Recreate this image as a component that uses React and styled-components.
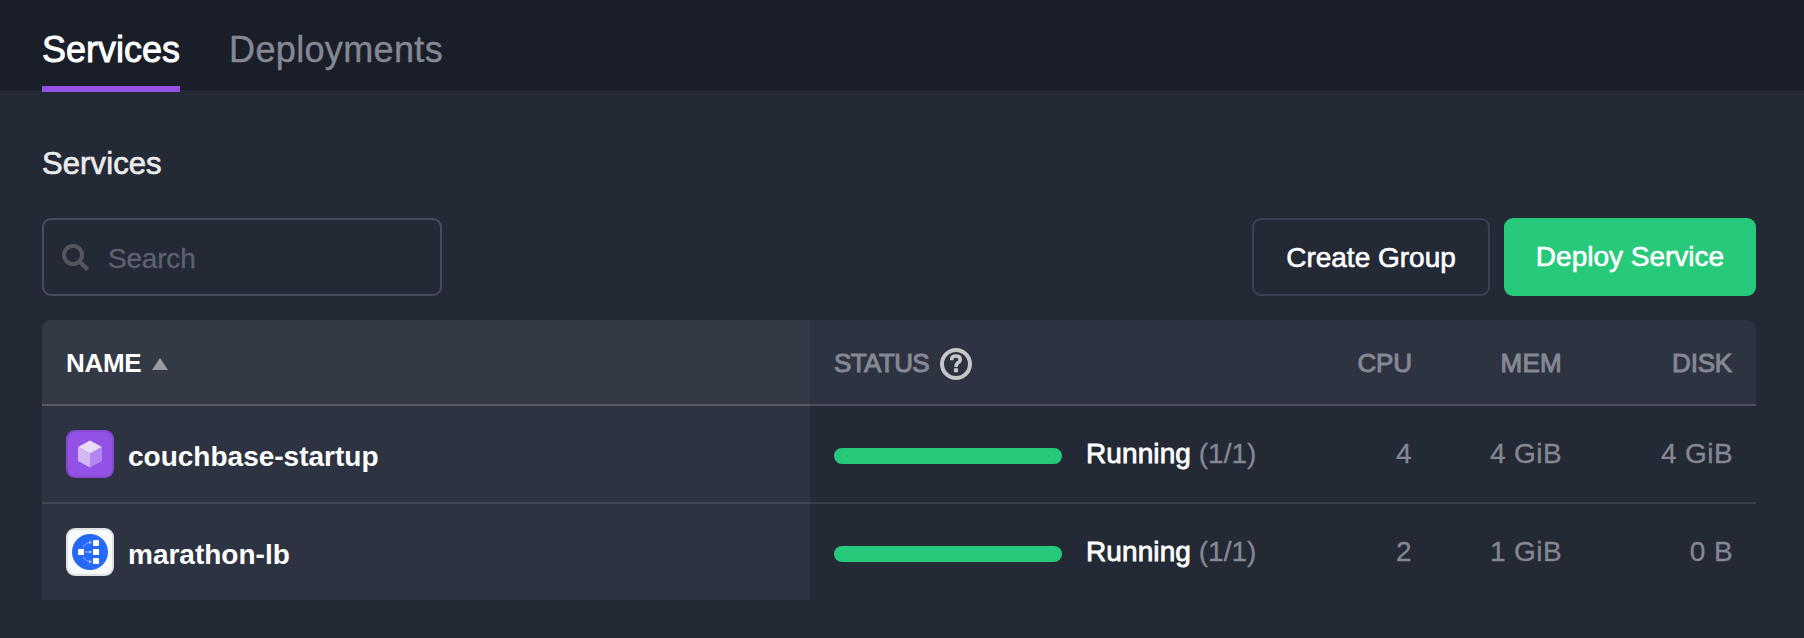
import React from "react";
import styled, { createGlobalStyle } from "styled-components";

const GlobalStyle = createGlobalStyle`
  *, *::before, *::after { box-sizing: border-box; }
  body {
    margin: 0;
    background: #242936;
    color: #fff;
    font-family: "Liberation Sans", Arial, sans-serif;
    font-size: 28px;
  }
  button, input { font: inherit; color: inherit; }
`;

const Page = styled.div`
  min-height: 638px;
  overflow: hidden;
`;

const TopBar = styled.nav`
  display: flex;
  gap: 49px;
  height: 90px;
  padding: 0 42px;
  background: #1a1e28;
`;

const Tab = styled.a`
  position: relative;
  height: 90px;
  padding-top: 9px;
  font-size: 36px;
  line-height: 81px;
  letter-spacing: ${(p) => (p.$active ? "0" : "0.35px")};
  color: ${(p) => (p.$active ? "#fff" : "#858893")};
  -webkit-text-stroke: ${(p) => (p.$active ? "0.9px" : "0.4px")} currentColor;

  &::after {
    content: "";
    display: ${(p) => (p.$active ? "block" : "none")};
    position: absolute;
    left: 0;
    right: 0;
    bottom: -2px;
    height: 6px;
    background: #9351e5;
  }
`;

const Content = styled.main`
  padding: 54px 48px 0 42px;
`;

const Heading = styled.h1`
  margin: 0 0 34px;
  font-size: 31px;
  font-weight: 400;
  line-height: 40px;
  letter-spacing: 0.1px;
  color: #ebebec;
  -webkit-text-stroke: 0.7px currentColor;
`;

const Toolbar = styled.div`
  display: flex;
  align-items: stretch;
  height: 78px;
  margin-bottom: 24px;
`;

const SearchBox = styled.label`
  display: flex;
  align-items: center;
  gap: 19px;
  width: 400px;
  margin-right: auto;
  padding: 0 18px;
  border: 2px solid #474b5e;
  border-radius: 9px;

  svg { flex: none; }
`;

const SearchInput = styled.input`
  flex: 1;
  min-width: 0;
  padding: 3px 0 0;
  border: 0;
  outline: 0;
  background: none;
  letter-spacing: -0.2px;
  -webkit-text-stroke: 0.3px #5d6171;

  &::placeholder { color: #5d6171; opacity: 1; }
`;

const Button = styled.button`
  width: ${(p) => (p.$primary ? "252px" : "238px")};
  margin-left: ${(p) => (p.$primary ? "14px" : "0")};
  padding: ${(p) => (p.$primary ? "0 0 1px" : "2px 0 0")};
  border: ${(p) => (p.$primary ? "0" : "2px solid #3c4054")};
  border-radius: 9px;
  background: ${(p) => (p.$primary ? "#27c97b" : "transparent")};
  color: #fff;
  -webkit-text-stroke: 0.6px currentColor;
  white-space: nowrap;
`;

const Table = styled.div`
  border-radius: 9px 9px 0 0;
  overflow: hidden;
`;

const Row = styled.div`
  display: grid;
  grid-template-columns: 768px 442px 160px 150px 1fr;
  height: ${(p) => (p.$last ? "96px" : "98px")};
  box-shadow: ${(p) => (p.$last ? "none" : "inset 0 -2px #393e4b")};
`;

const HeaderRow = styled(Row)`
  height: 86px;
  background: #2e3341;
  box-shadow: none;
`;

const Cell = styled.div`
  display: flex;
  align-items: center;
  justify-content: ${(p) => (p.$right ? "flex-end" : "flex-start")};
  padding: 0 ${(p) => (p.$right ? "0" : "24px")} 2px;
  padding-left: ${(p) => (p.$right ? "0" : "24px")};
  color: #858893;
`;

const ValueCell = styled(Cell)`
  padding: 0 ${(p) => (p.$end ? "23px" : "0")} ${(p) => (p.$last ? "0" : "2px")} 0;
  letter-spacing: 0.4px;
  -webkit-text-stroke: 0.3px currentColor;
`;

const HeaderCell = styled(Cell)`
  padding: 3px ${(p) => (p.$end ? "24px" : p.$right ? "0" : "24px")} 1px;
  border-bottom: 2px solid ${(p) => (p.$sorted ? "#555962" : "#4c4f5d")};
  background: ${(p) => (p.$sorted ? "#343946" : "transparent")};
  font-size: 26px;
  font-weight: ${(p) => (p.$sorted ? 700 : 400)};
  color: ${(p) => (p.$sorted ? "#fff" : "#858893")};
  -webkit-text-stroke: ${(p) => (p.$sorted ? "0" : "1px")} currentColor;

  svg { flex: none; margin: 2px 0 0 11px; }
`;

const HeaderLabel = styled.span`
  letter-spacing: ${(p) => p.$tracking}px;
`;

const NameCell = styled(Cell)`
  gap: 14px;
  padding-bottom: ${(p) => (p.$last ? "0" : "2px")};
  background: #2e3341;
  box-shadow: ${(p) => (p.$last ? "none" : "inset 0 -2px #414653")};
`;

const ServiceName = styled.span`
  padding-top: 5px;
  font-weight: 700;
  color: #fff;
`;

const StatusCell = styled(Cell)`
  padding-right: 0;
  padding-bottom: ${(p) => (p.$last ? "0" : "2px")};
  white-space: pre;
  -webkit-text-stroke: 0.3px currentColor;
`;

const HealthBar = styled.div`
  flex: none;
  width: 228px;
  height: 16px;
  margin: 4px 24px 0 0;
  border-radius: 8px;
  background: #27c97b;
`;

const StatusText = styled.span`
  color: #fff;
  letter-spacing: 0.1px;
  -webkit-text-stroke: 0.8px currentColor;
`;

function SearchIcon() {
  return (
    <svg width="27" height="27" viewBox="0 0 27 27" fill="none" stroke="#53565f" strokeWidth="4">
      <circle cx="11" cy="11" r="9" />
      <path d="M17.5 17.5 25.6 25.6" strokeWidth="4.2" />
    </svg>
  );
}

function SortIcon() {
  return (
    <svg width="16" height="12" viewBox="0 0 16 12">
      <path d="M8 0 16 12H0Z" fill="#9a9ca3" />
    </svg>
  );
}

function HelpIcon() {
  return (
    <svg width="32" height="32" viewBox="0 0 32 32" fill="none" stroke="#c7c7cb" strokeWidth="4">
      <circle cx="16" cy="16" r="14" />
      <path d="M11.8 12.2V11Q11.8 8 16 8T20.2 11.6Q20.2 13.6 18.2 14.6T16 19" strokeWidth="3.6" />
      <path d="M14 22.3h4" />
    </svg>
  );
}

function PackageIcon() {
  return (
    <svg width="48" height="48" viewBox="0 0 48 48">
      <rect width="48" height="48" rx="9" fill="#8449ce" />
      <rect x="2" y="2" width="44" height="44" rx="7" fill="#9351e5" />
      <path d="M24 10.5 36 17 24 23.7 12 17Z" fill="#e9dcfa" />
      <path d="M12 17 24 23.7V37.5L12 31Z" fill="#d3b8f5" />
      <path d="M36 17 24 23.7V37.5L36 31Z" fill="#b586ee" />
    </svg>
  );
}

function BalancerIcon() {
  return (
    <svg width="48" height="48" viewBox="0 0 48 48">
      <rect width="48" height="48" rx="9" fill="#e1e1e1" />
      <rect x="2" y="2" width="44" height="44" rx="7" fill="#fafafa" />
      <circle cx="24" cy="24" r="18" fill="#2669f6" />
      <g fill="#fff">
        <rect x="12" y="21" width="6" height="6" rx="0.8" />
        <rect x="27" y="12" width="6" height="6" rx="0.8" />
        <rect x="27" y="21" width="6" height="6" rx="0.8" />
        <rect x="27" y="30" width="6" height="6" rx="0.8" />
      </g>
      <g fill="none" stroke="#a9c6fc" strokeWidth="0.9">
        <path d="M17 19Q19.5 15 24 14.4" strokeDasharray="2 0.7" />
        <path d="M19 24H24.5" />
        <path d="M17 29Q19.5 33 24 33.6" strokeDasharray="2 0.7" />
      </g>
      <g fill="#c4d8fd">
        <path d="M23.2 12.7 26 14.3 23.4 16Z" />
        <path d="M23.4 22.5 26 24 23.4 25.5Z" />
        <path d="M23.4 32 26 33.7 23.2 35.3Z" />
      </g>
    </svg>
  );
}

const services = [
  { name: "couchbase-startup", Icon: PackageIcon, cpu: "4", mem: "4 GiB", disk: "4 GiB" },
  { name: "marathon-lb", Icon: BalancerIcon, cpu: "2", mem: "1 GiB", disk: "0 B" },
];

export default function App() {
  return (
    <Page>
      <GlobalStyle />
      <TopBar>
        <Tab $active>Services</Tab>
        <Tab>Deployments</Tab>
      </TopBar>
      <Content>
        <Heading>Services</Heading>
        <Toolbar>
          <SearchBox>
            <SearchIcon />
            <SearchInput placeholder="Search" />
          </SearchBox>
          <Button>Create Group</Button>
          <Button $primary>Deploy Service</Button>
        </Toolbar>
        <Table>
          <HeaderRow>
            <HeaderCell $sorted><HeaderLabel $tracking={-0.3}>NAME</HeaderLabel><SortIcon /></HeaderCell>
            <HeaderCell><HeaderLabel $tracking={-0.6}>STATUS</HeaderLabel><HelpIcon /></HeaderCell>
            <HeaderCell $right><HeaderLabel $tracking={-0.1}>CPU</HeaderLabel></HeaderCell>
            <HeaderCell $right><HeaderLabel $tracking={0.3}>MEM</HeaderLabel></HeaderCell>
            <HeaderCell $right $end><HeaderLabel $tracking={-0.2}>DISK</HeaderLabel></HeaderCell>
          </HeaderRow>
          {services.map(({ name, Icon, cpu, mem, disk }, i) => {
            const last = i === services.length - 1;
            return (
              <Row key={name} $last={last}>
                <NameCell $last={last}>
                  <Icon />
                  <ServiceName>{name}</ServiceName>
                </NameCell>
                <StatusCell $last={last}>
                  <HealthBar />
                  <StatusText>Running</StatusText> (1/1)
                </StatusCell>
                <ValueCell $right $last={last}>{cpu}</ValueCell>
                <ValueCell $right $last={last}>{mem}</ValueCell>
                <ValueCell $right $end $last={last}>{disk}</ValueCell>
              </Row>
            );
          })}
        </Table>
      </Content>
    </Page>
  );
}
